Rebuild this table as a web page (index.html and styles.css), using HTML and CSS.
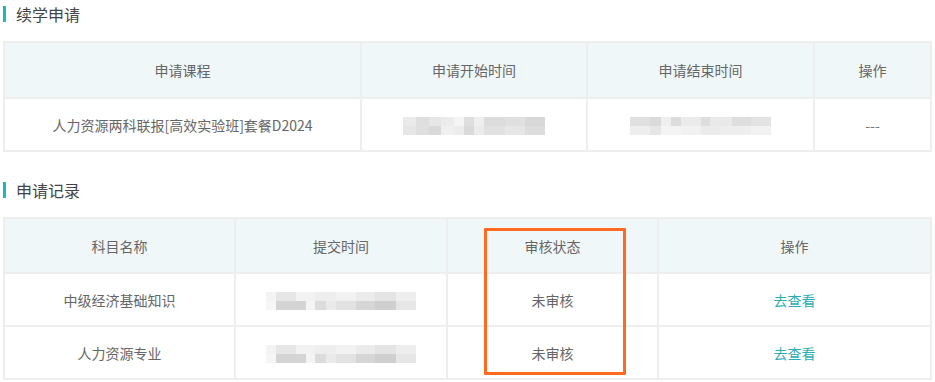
FILE: index.html
```html
<!DOCTYPE html>
<html lang="zh-CN">
<head>
  <meta charset="UTF-8">
  <meta name="viewport" content="width=device-width, initial-scale=1.0">
  <title>续学申请</title>
  <link rel="stylesheet" href="styles.css">
</head>
<body>
  <h2 class="section-title">续学申请</h2>
  <table class="data-table apply-table">
    <colgroup>
      <col style="width: 357px">
      <col style="width: 226px">
      <col style="width: 227px">
      <col>
    </colgroup>
    <thead>
      <tr>
        <th>申请课程</th>
        <th>申请开始时间</th>
        <th>申请结束时间</th>
        <th>操作</th>
      </tr>
    </thead>
    <tbody>
      <tr>
        <td>人力资源两科联报[高效实验班]套餐D2024</td>
        <td><span class="masked masked-a"></span></td>
        <td><span class="masked masked-b"></span></td>
        <td class="muted">---</td>
      </tr>
    </tbody>
  </table>

  <h2 class="section-title section-title-2">申请记录</h2>
  <div class="record-wrap">
    <table class="data-table record-table">
      <colgroup>
        <col style="width: 231px">
        <col style="width: 212px">
        <col style="width: 211px">
        <col>
      </colgroup>
      <thead>
        <tr>
          <th>科目名称</th>
          <th>提交时间</th>
          <th>审核状态</th>
          <th>操作</th>
        </tr>
      </thead>
      <tbody>
        <tr>
          <td>中级经济基础知识</td>
          <td><span class="masked masked-c"></span></td>
          <td>未审核</td>
          <td><a class="link" href="#">去查看</a></td>
        </tr>
        <tr>
          <td>人力资源专业</td>
          <td><span class="masked masked-c"></span></td>
          <td>未审核</td>
          <td><a class="link" href="#">去查看</a></td>
        </tr>
      </tbody>
    </table>
    <div class="highlight-box"></div>
  </div>
</body>
</html>
```

FILE: styles.css
```css
body {
  margin: 0;
  padding: 0 3px;
  font-family: "Noto Sans CJK SC", "Microsoft YaHei", sans-serif;
  color: #666;
  background: #fff;
}

.section-title {
  margin: 6px 0 19px;
  padding-left: 10px;
  border-left: 3px solid #1cb8bd;
  height: 16px;
  font-size: 16px;
  line-height: 16px;
  font-weight: normal;
  color: #444;
}
.section-title-2 {
  margin-top: 30px;
}

.data-table {
  width: 929px;
  border-collapse: collapse;
  table-layout: fixed;
  border: 2px solid #eeeeee;
  font-size: 14px;
}
.data-table th,
.data-table td {
  border: 2px solid #eeeeee;
  text-align: center;
  padding: 0;
}
.data-table th {
  height: 54px;
  background: #f0f7f9;
  font-weight: normal;
  color: #666;
}
.data-table td {
  height: 51px;
  color: #666;
}
.record-table th {
  height: 53px;
}
.data-table .muted {
  color: #777;
}

.link {
  color: #27adb2;
  text-decoration: none;
}

/* pixelated placeholder for hidden dates */
.masked {
  display: inline-block;
  vertical-align: middle;
  height: 18px;
  background-repeat: no-repeat;
  background-size: 100% 50%;
  background-position: 0 0, 0 100%;
}
.masked-a {
  width: 142px;
  background-image:
    linear-gradient(90deg, #eaeaea 0 9%, #dedede 9% 18%, #e6e6e6 18% 27%, #ebebeb 27% 36%, #f5f5f5 36% 43%, #dedede 43% 50%, #efefef 50% 57%, #dcdcdc 57% 72%, #e0e0e0 72% 86%, #d8d8d8 86% 100%),
    linear-gradient(90deg, #e6e6e6 0 9%, #dfdfdf 9% 18%, #d9d9d9 18% 27%, #f0f0f0 27% 36%, #ececec 36% 43%, #dadada 43% 50%, #ebebeb 50% 57%, #e1e1e1 57% 72%, #e6e6e6 72% 86%, #dddddd 86% 100%);
}
.masked-b {
  width: 141px;
  background-image:
    linear-gradient(90deg, #e0e0e0 0 14%, #dadada 14% 22%, #efefef 22% 29%, #dcdcdc 29% 36%, #ebebeb 36% 50%, #dddddd 50% 57%, #e9e9e9 57% 72%, #dedede 72% 86%, #e3e3e3 86% 100%),
    linear-gradient(90deg, #eeeeee 0 14%, #e6e6e6 14% 22%, #f4f4f4 22% 36%, #f1f1f1 36% 50%, #ebebeb 50% 64%, #eeeeee 64% 86%, #f2f2f2 86% 100%);
}
.masked-c {
  width: 150px;
  background-image:
    linear-gradient(90deg, #f3f3f3 0 7%, #e6e6e6 7% 20%, #f2f2f2 20% 33%, #eeeeee 33% 47%, #f2f2f2 47% 60%, #ebebeb 60% 73%, #e4e4e4 73% 87%, #eeeeee 87% 100%),
    linear-gradient(90deg, #f6f6f6 0 7%, #d4d4d4 7% 27%, #f4f4f4 27% 33%, #dcdcdc 33% 40%, #eaeaea 40% 47%, #e2e2e2 47% 60%, #d6d6d6 60% 73%, #cfcfcf 73% 87%, #e6e6e6 87% 100%);
}

.record-wrap {
  position: relative;
}
/* orange outline drawn over the status column */
.highlight-box {
  position: absolute;
  left: 481px;
  top: 11px;
  width: 136px;
  height: 141px;
  border: 3px solid #ff6a1f;
  border-radius: 1px;
}
```
